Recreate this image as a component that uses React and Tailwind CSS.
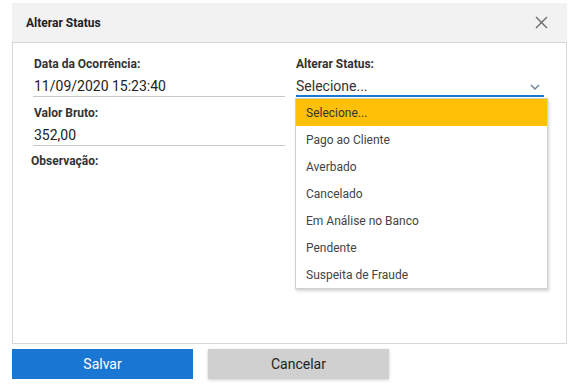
import React from "react";

const items = [
  "Selecione...",
  "Pago ao Cliente",
  "Averbado",
  "Cancelado",
  "Em Análise no Banco",
  "Pendente",
  "Suspeita de Fraude",
];

export default function App() {
  return (
    <div
      className="w-[580px] h-[387px] bg-white pt-[3px] pl-[12px] pr-[13px] text-[#333]"
      style={{ fontFamily: "Roboto, 'Liberation Sans', sans-serif" }}
    >
      <div className="h-[39px] bg-[#f2f2f2] flex items-center justify-between pl-[14px] pr-[19px]">
        <span className="text-[12px] font-bold text-[#222]">Alterar Status</span>
        <svg width="13" height="13" viewBox="0 0 13 13">
          <path d="M1 1 L12 12 M12 1 L1 12" stroke="#6b6b6b" strokeWidth="1.4" fill="none" />
        </svg>
      </div>
      <div className="h-[302px] border border-[#d6d6d6] pl-[20px] pr-[21px] pt-[14px]">
        <div className="flex gap-[11px]">
          <div className="w-[252px] flex flex-col">
            <div className="pl-[1px] text-[12px] leading-[15px] font-bold text-[#333]">Data da Ocorrência:</div>
            <div className="mt-[4px] h-[21px] pl-[1px] text-[14px] leading-[20px] text-[#222] border-b border-[#c8c8c8]">
              11/09/2020 15:23:40
            </div>
            <div className="mt-[9px] pl-[1px] text-[12px] leading-[15px] font-bold text-[#333]">Valor Bruto:</div>
            <div className="mt-[4px] h-[21px] pl-[1px] text-[14px] leading-[20px] text-[#222] border-b border-[#c8c8c8]">
              352,00
            </div>
            <div className="mt-[8px] ml-[-2px] text-[12px] leading-[15px] font-bold text-[#333]">Observação:</div>
          </div>
          <div className="w-[248px] flex flex-col relative">
            <div className="text-[12px] leading-[15px] font-bold text-[#333]">Alterar Status:</div>
            <div className="mt-[4px] h-[21px] flex items-start justify-between border-b-2 border-[#1976d2] pr-[4px]">
              <span className="text-[14px] leading-[20px] text-[#333]">Selecione...</span>
              <svg width="10" height="6" viewBox="0 0 10 6" className="mt-[8px]">
                <path d="M1 1 L5 5 L9 1" stroke="#6f7f95" strokeWidth="1.4" fill="none" />
              </svg>
            </div>
            <div className="absolute left-[-1px] top-[41px] w-[253px] bg-white border border-[#d0d0d0] shadow-[1px_2px_3px_rgba(0,0,0,0.18)] flex flex-col">
              {items.map((it, i) => (
                <div
                  key={it}
                  className={
                    i === 0
                      ? "h-[27px] flex items-center pl-[10px] text-[12px] text-[#333] bg-[#ffc107]"
                      : "h-[27px] flex items-center pl-[10px] text-[12px] text-[#444]"
                  }
                >
                  {it}
                </div>
              ))}
            </div>
          </div>
        </div>
      </div>
      <div className="mt-[5px] flex gap-[15px]">
        <button className="w-[181px] h-[30px] bg-[#1976d2] text-white text-[14px]">Salvar</button>
        <button className="w-[181px] h-[30px] bg-[#d0d0d0] text-[#222] text-[14px] shadow-[0_1px_3px_rgba(0,0,0,0.2)]">
          Cancelar
        </button>
      </div>
    </div>
  );
}
